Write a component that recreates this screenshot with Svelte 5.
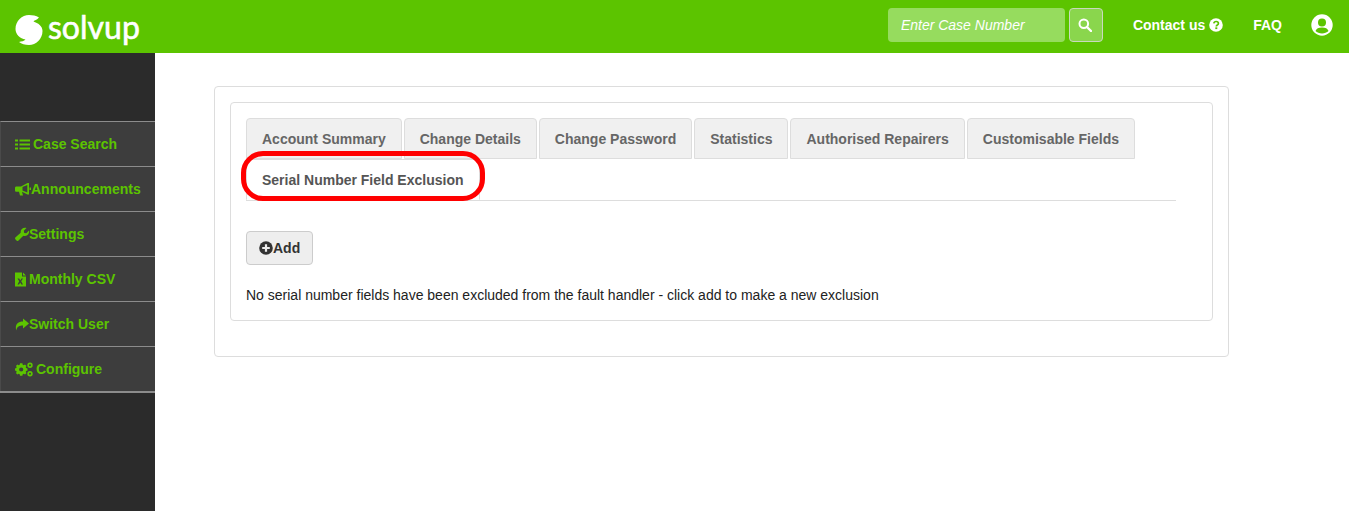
<script>
  const nav = [
    { label: "Case Search", icon: "list", w: 15, gap: 3 },
    { label: "Announcements", icon: "bullhorn", w: 16, gap: 0 },
    { label: "Settings", icon: "wrench", w: 14, gap: 0 },
    { label: "Monthly CSV", icon: "csv", w: 11, gap: 3 },
    { label: "Switch User", icon: "share", w: 14, gap: 0 },
    { label: "Configure", icon: "cogs", w: 18, gap: 3 }
  ];
  const tabs = [
    "Account Summary",
    "Change Details",
    "Change Password",
    "Statistics",
    "Authorised Repairers",
    "Customisable Fields",
    "Serial Number Field Exclusion"
  ];
  const activeTab = "Serial Number Field Exclusion";
</script>

<header class="topbar">
  <div class="logo">
    <svg width="30" height="32" viewBox="0 0 30 32">
      <path fill="#fff" d="M25 3.500C23 6 20.500 6 19.500 7.500 24 9 28.500 12 28.500 17 28.500 25 22 31 15 31 11 31 7.500 30 5 28 7.500 27.500 10 27 11.500 25.500 6 24.500 1.500 20.500 1.500 15 1.500 7 8 1 15 1 18.500 1 22 1.700 25 3.500z" />
    </svg>
    <span>solvup</span>
  </div>
  <div class="top-right">
    <input class="case-input" placeholder="Enter Case Number" />
    <button class="search-btn" aria-label="Search">
      <svg width="14" height="14" viewBox="0 0 14 14" fill="none" stroke="#fff" stroke-width="2">
        <circle cx="5.800" cy="5.800" r="4.300" />
        <path d="M9 9l4 4" stroke-width="2.400" stroke-linecap="round" />
      </svg>
    </button>
    <a class="contact">Contact us
      <svg width="14" height="14" viewBox="0 0 14 14">
        <circle cx="7" cy="7" r="6.800" fill="#fff" />
        <path d="M4.800 5.400C5 4.200 5.900 3.500 7.100 3.500c1.300 0 2.300.8 2.300 1.900 0 1.700-2.100 1.500-2.100 3" fill="none" stroke="#5cc400" stroke-width="1.700" />
        <rect x="6.300" y="9.300" width="2" height="1.800" fill="#5cc400" />
      </svg>
    </a>
    <a class="faq">FAQ</a>
    <svg class="user" width="22" height="22" viewBox="0 0 22 22">
      <circle cx="11" cy="11" r="10.700" fill="#fff" />
      <circle cx="11" cy="8.500" r="4" fill="#5cc400" />
      <path d="M4.500 17c.8-2.700 3-3.600 6.500-3.600s5.700.9 6.500 3.600c-1.600 1.600-4 2.500-6.500 2.500s-4.900-.9-6.500-2.500z" fill="#5cc400" />
    </svg>
  </div>
</header>

<div class="page">
  <aside class="sidebar">
    <nav>
      {#each nav as item}
        <a class="nav-item">
          <svg class="nav-icon" width={item.w} height="15" viewBox="0 0 {item.w} 15" fill="#5cc400" style="margin-right: {item.gap}px">
            {#if item.icon === "list"}
              <path d="M0 2.500h3v2H0zM4.500 2.500H15v2H4.500zM0 6.500h3v2H0zM4.500 6.500H15v2H4.500zM0 10.500h3v2H0zM4.500 10.500H15v2H4.500z" />
            {:else if item.icon === "bullhorn"}
              <path d="M0 6c0-1 .6-1.500 1.400-1.500H6L12.500 1h1.500v11.500h-1.500L7 9.800l1 3.700H5L4 9.800H1.400C.6 9.800 0 9.200 0 8.200z" />
              <path d="M12.300 3v7.500L7.500 8.500v-3.500z" fill="#3d3d3d" />
              <path d="M14.500 5.500H16v2.500h-1.500z" />
            {:else if item.icon === "wrench"}
              <path d="M.6 12.500c-.8-.8-.8-1.600 0-2.300L5.700 5.800C5.200 3 7.200 .8 10 .8c.6 0 1.100.1 1.500.3L8.800 3.800l.4 2.100 2.100.4L14 3.600c.6 2.900-1.500 5.400-4.300 5.400-.5 0-1-.1-1.400-.2L3.500 13.400c-1 .9-1.700.7-2.900-.9z" />
            {:else if item.icon === "csv"}
              <path fill-rule="evenodd" d="M0 .5h7v4h4v10H0zM8 .5l3 3H8zM2.500 6.500l1.700 2.700-1.700 3.300h1.600l1.100-2 1.100 2h1.700L6.200 9.200 8 6.500H6.400l-1.100 2-1.100-2z" />
            {:else if item.icon === "share"}
              <path d="M8 1.500l6 5-6 5V8.500C4.500 8.500 2 9.300 1.300 13.500-.2 8.500 2 4.500 8 4.500z" />
            {:else}
              <path fill-rule="evenodd" d="M5 3h2.400l.3 1.500 1 .5L10 4.200l1.500 1.500-.8 1.200.4 1 1.400.3v2.200l-1.400.3-.4 1 .8 1.200L10 14.400 8.700 13.600l-1 .4-.3 1.500H5L4.700 14l-1-.4-1.300.8L.9 12.900l.8-1.200-.4-1L0 10.400V8.200l1.300-.3.4-1-.8-1.200L2.400 4.200l1.300.8 1-.5zM6.200 7.200a2.100 2.100 0 100 4.200 2.100 2.100 0 000-4.200z" transform="translate(0 -1.800)" />
              <path fill-rule="evenodd" d="M15 .5a2.700 2.700 0 110 5.400 2.700 2.700 0 010-5.400zm0 1.700a1 1 0 100 2 1 1 0 000-2zM15 9a2.700 2.700 0 110 5.400A2.700 2.700 0 0115 9zm0 1.700a1 1 0 100 2 1 1 0 000-2z" />
            {/if}
          </svg>
          <span>{item.label}</span>
        </a>
      {/each}
    </nav>
  </aside>

  <main class="content">
    <div class="outer">
      <div class="inner">
        <ul class="tabs">
          {#each tabs as tab}
            <li class="tab" class:active={tab === activeTab}>
              {tab}
              {#if tab === activeTab}<span class="highlight"></span>{/if}
            </li>
          {/each}
        </ul>
        <button class="add">
          <svg width="14" height="14" viewBox="0 0 14 14">
            <circle cx="7" cy="7" r="6.800" fill="#333" />
            <path d="M7 3.200v7.600M3.200 7h7.600" stroke="#eee" stroke-width="2.200" />
          </svg>Add
        </button>
        <p class="empty">No serial number fields have been excluded from the fault handler - click add to make a new exclusion</p>
      </div>
    </div>
  </main>
</div>

<style>
  :global(body) {
    font-family: "Liberation Sans", Arial, sans-serif;
    font-size: 14px;
    color: #222;
    background: #fff;
  }

  .topbar {
    height: 53px;
    background: #5cc400;
    display: flex;
    justify-content: space-between;
    align-items: center;
    color: #fff;
  }

  .logo {
    display: flex;
    align-items: center;
    gap: 4px;
    padding: 7px 0 0 14px;
  }

  .logo span {
    font-family: Lato, sans-serif;
    font-size: 32px;
    line-height: 34px;
    margin-top: -6px;
    font-weight: 400;
    -webkit-text-stroke: 0.6px #fff;
  }

  .top-right {
    display: flex;
    align-items: center;
    padding: 0 16px 3px 0;
  }

  .case-input {
    width: 177px;
    height: 34px;
    box-sizing: border-box;
    padding: 0 13px;
    border: 0;
    border-radius: 4px;
    background: #96dc5e;
    font: italic 14px "Liberation Sans", Arial, sans-serif;
    color: #fff;
  }

  .case-input::placeholder {
    color: #fff;
    opacity: 1;
  }

  .search-btn {
    width: 34px;
    height: 34px;
    margin-left: 4px;
    padding: 0 2px 0 0;
    border: 1px solid #c9d9bd;
    border-radius: 4px;
    background: #8ad64d;
    display: flex;
    align-items: center;
    justify-content: center;
  }

  .contact {
    margin-left: 30px;
    font-weight: 700;
    display: flex;
    align-items: center;
    gap: 4px;
  }

  .faq {
    margin-left: 30px;
    font-weight: 700;
  }

  .user {
    margin-left: 29px;
  }

  .page {
    display: flex;
    min-height: 458px;
  }

  .sidebar {
    width: 155px;
    flex: none;
    background: #2b2b2b;
    padding-top: 68px;
    box-sizing: border-box;
  }

  nav {
    border-bottom: 2px solid #8c8c8c;
  }

  .nav-item {
    height: 45px;
    box-sizing: border-box;
    display: flex;
    align-items: center;
    padding-left: 14px;
    background: #3d3d3d;
    border-top: 1px solid #8c8c8c;
    border-left: 1px solid #4a4a4a;
    color: #5cc400;
    font-size: 14px;
    font-weight: 700;
  }

  .nav-icon {
    flex: none;
  }

  .content {
    flex: 1;
    padding: 33px 120px 0 59px;
  }

  .outer {
    height: 271px;
    box-sizing: border-box;
    padding: 15px;
    border: 1px solid #ddd;
    border-radius: 4px;
  }

  .inner {
    height: 219px;
    box-sizing: border-box;
    padding: 15px 36px 0 15px;
    border: 1px solid #ddd;
    border-radius: 4px;
  }

  .tabs {
    list-style: none;
    margin: 0;
    padding: 0;
    display: flex;
    flex-wrap: wrap;
    border-bottom: 1px solid #ddd;
  }

  .tab {
    position: relative;
    box-sizing: border-box;
    height: 41px;
    line-height: 41px;
    margin-right: 2px;
    padding: 0 15px;
    border: 1px solid #ddd;
    border-radius: 4px 4px 0 0;
    background: #f0f0f0;
    color: #666;
    font-weight: 700;
  }

  .tab.active {
    background: #fff;
    color: #555;
    border-bottom-color: #fff;
  }

  .highlight {
    position: absolute;
    left: -6px;
    top: -9px;
    right: -6px;
    bottom: -2px;
    border: 5px solid #f00;
    border-radius: 22px;
  }

  .add {
    display: flex;
    align-items: center;
    height: 34px;
    margin-top: 30px;
    padding: 0 12px;
    border: 1px solid #ccc;
    border-radius: 4px;
    background: #eee;
    color: #333;
    font: 700 14px "Liberation Sans", Arial, sans-serif;
  }

  .empty {
    margin: 20px 0 0;
    line-height: 20px;
    color: #222;
  }
</style>
